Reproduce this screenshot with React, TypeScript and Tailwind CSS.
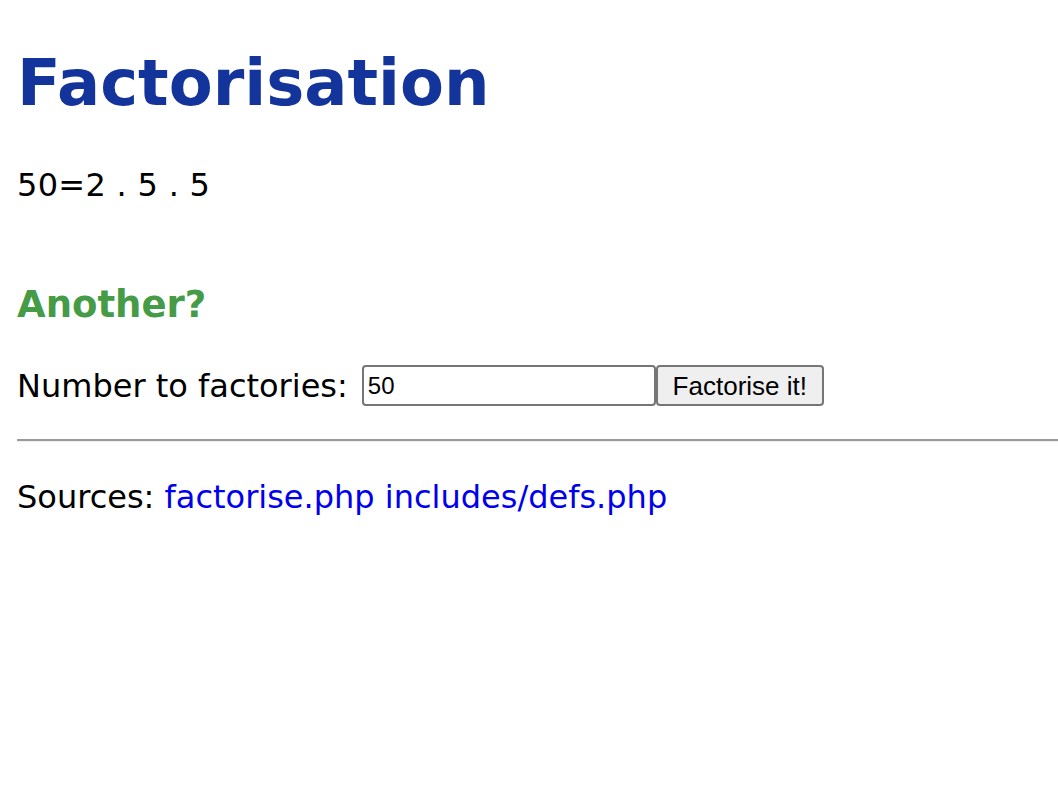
import React from "react";

export default function App() {
  return (
    <div className="min-h-[796px] bg-white pl-[17px] text-black" style={{ fontFamily: '"DejaVu Sans", Verdana, sans-serif' }}>
      <h1 className="pt-[45px] text-[64px] font-bold leading-[77px] text-[#13349a]">Factorisation</h1>
      <p className="mt-[44px] text-[32px] leading-[38px] tracking-[0.3px]">50=2 . 5 . 5</p>
      <h2 className="mt-[79px] text-[37px] font-bold leading-[44px] text-[#459b46]">Another?</h2>
      <form className="mt-[38px] flex items-center text-[32px] leading-[38px]" onSubmit={(e) => e.preventDefault()}>
        <label>Number to factories:</label>
        <input
          defaultValue="50"
          className="ml-[14px] h-[41px] w-[294px] rounded-[4px] border-2 border-[#767676] px-[4px] text-[24px] outline-none"
          style={{ fontFamily: '"Liberation Sans", Arial, sans-serif' }}
        />
        <button
          type="submit"
          className="h-[41px] w-[168px] rounded-[4px] border-2 border-[#767676] bg-[#efefef] text-[26px]"
          style={{ fontFamily: '"Liberation Sans", Arial, sans-serif' }}
        >
          Factorise it!
        </button>
      </form>
      <hr className="mt-[33px] h-[3px] border-t-2 border-b border-t-[#9b9b9b] border-b-[#eeeeee]" />
      <p className="mt-[36px] text-[32px] leading-[38px]">
        Sources: <a href="#" className="text-[#0000ee]">factorise.php</a> <a href="#" className="text-[#0000ee]">includes/defs.php</a>
      </p>
    </div>
  );
}
